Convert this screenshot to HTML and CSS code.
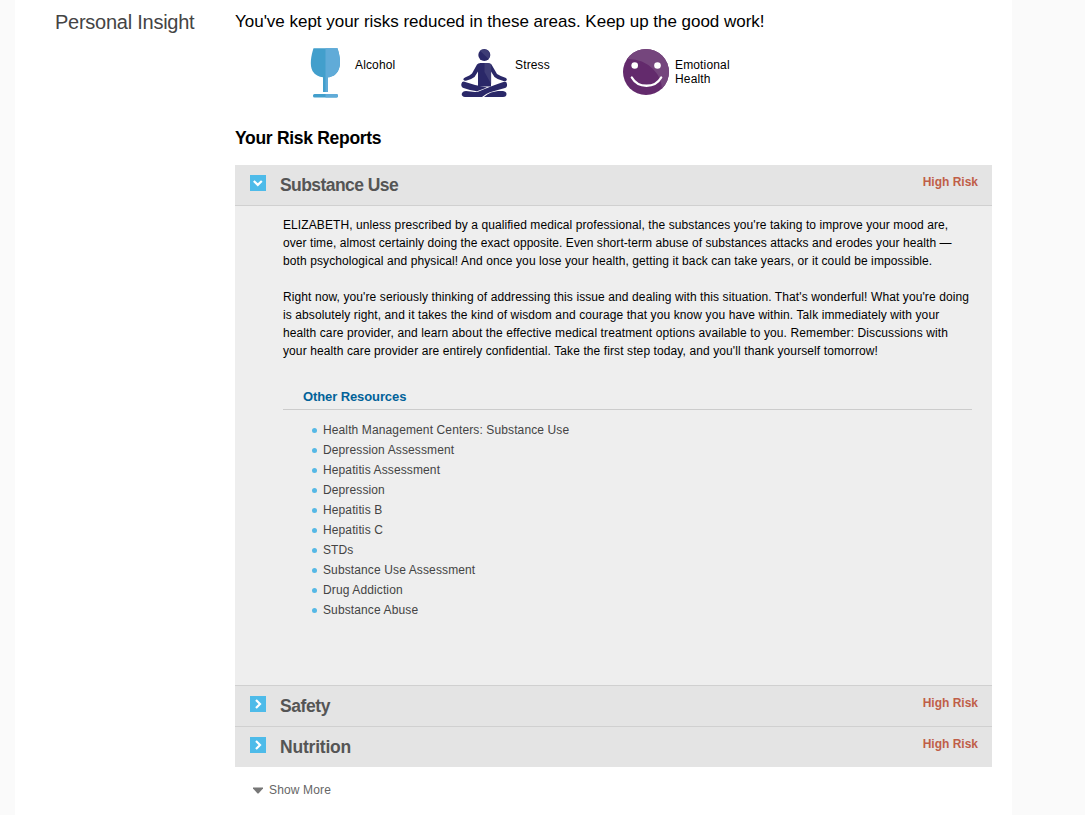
FILE: index.html
```html
<!DOCTYPE html>
<html lang="en">
<head>
<meta charset="utf-8">
<title>Personal Insight</title>
<link rel="stylesheet" href="styles.css">
</head>
<body>
<div class="page">
  <h1 class="side-title">Personal Insight</h1>
  <main class="content">
    <p class="lead">You've kept your risks reduced in these areas. Keep up the good work!</p>
    <div class="areas">
      <div class="area">
        <svg class="area-icon" width="50" height="50" viewBox="0 0 50 50">
          <path fill="#429fcc" d="M13.500 .3H37.500C40 8 41.500 17 38 23C35.500 27.500 31.500 29 28 29.300V44H23V29.300C19 29 15 27 12.500 23C9.500 17 11 8 13.500 .3Z"/>
          <path fill="#60abd8" d="M25.500 .3H37.500C40 8 41.500 17 38 23C35.500 27.500 31.500 29 28 29.300V44H25.500Z"/>
          <rect x="13" y="46" width="25" height="3.600" rx="1.500" fill="#429fcc"/>
          <path fill="#60abd8" d="M25.500 46H36.500Q38 46 38 47.800T36.500 49.600H25.500Z"/>
        </svg>
        <span class="area-name">Alcohol</span>
      </div>
      <div class="area">
        <svg class="area-icon" width="50" height="50" viewBox="0 0 50 50">
          <g fill="#2a2868">
            <circle cx="24.300" cy="6.900" r="6"/>
            <path d="M17 16.500Q18 15 20.500 15H28Q30.500 15 31.500 16.500L37 26Q41 28.500 46 30Q47.500 31 46.500 32.500Q45 33.500 42 32.500Q37 31 34.500 29L31 23.500V38.500H18V23.500L14.500 29Q12 31 6 32.700Q4 33 3.300 31.500Q3.300 30 5.500 29.300Q10 27.500 12 25.500Z"/>
            <path d="M4.500 33.700Q2 33.200 1.300 36Q1 39 3.500 40Q10 42.500 17 43.300L27 39.500Q15 37.500 4.500 33.700Z"/>
            <path d="M44 33.700Q46.500 33.200 47 36Q47.500 39 45 40Q36 42.500 30 44.200Q25 46 22 49H5Q1.700 48.500 1.700 46Q2.500 43.200 6 43L15 44Q18 44 21 42.500Q30 38.500 44 33.700Z"/>
            <path d="M31 44.500Q34 43.600 38 43H43Q46.500 43.500 46.500 46Q46.500 48.800 43 49H24Q27 46 31 44.500Z"/>
          </g>
          <path fill="#47467c" d="M20 2.700A6 6 0 0 1 28.500 11.100ZM24.500 15H28Q30.500 15 31.200 16.500V36L24.500 24Z" opacity=".7"/>
        </svg>
        <span class="area-name">Stress</span>
      </div>
      <div class="area">
        <svg class="area-icon" width="50" height="50" viewBox="0 0 50 50">
          <clipPath id="face"><circle cx="26" cy="24" r="23"/></clipPath>
          <circle cx="26" cy="24" r="23" fill="#632a6c"/>
          <path clip-path="url(#face)" fill="#75467d" d="M6 11Q22 10 33 21Q42 30 42 42H50V0H6Z"/>
          <circle cx="14.700" cy="17.500" r="3.300" fill="#fff"/>
          <circle cx="37.500" cy="17.500" r="3.300" fill="#fff"/>
          <path d="M11.800 29.500C18 40.500 35 40.500 41.200 29.500" fill="none" stroke="#fff" stroke-width="2.300" stroke-linecap="round"/>
        </svg>
        <span class="area-name">Emotional<br>Health</span>
      </div>
    </div>
    <h2 class="reports-title">Your Risk Reports</h2>
    <div class="accordion">
      <section class="report">
        <header class="report-head">
          <svg class="toggle" width="16" height="16" viewBox="0 0 16 16"><rect width="16" height="16" fill="#4ebbe9"/><path d="M3.800 6L7.800 9.900L11.800 6" fill="none" stroke="#fff" stroke-width="2.200"/></svg>
          <h3 class="report-name name-substance">Substance Use</h3>
          <span class="risk">High Risk</span>
        </header>
        <div class="report-body">
          <p class="para"><span class="tight">ELIZABETH, unless prescribed by a qualified medical professional, the substances you're taking to improve your mood are,</span><br><span class="tighter">over time, almost certainly doing the exact opposite. Even short-term abuse of substances attacks and erodes your health —</span><br>both psychological and physical! And once you lose your health, getting it back can take years, or it could be impossible.</p>
          <p class="para">Right now, you're seriously thinking of addressing this issue and dealing with this situation. That's wonderful! What you're doing<br><span class="loose">is absolutely right, and it takes the kind of wisdom and courage that you know you have within. Talk immediately with your</span><br><span class="loose">health care provider, and learn about the effective medical treatment options available to you. Remember: Discussions with</span><br>your health care provider are entirely confidential. Take the first step today, and you'll thank yourself tomorrow!</p>
          <h4 class="resources-title">Other Resources</h4>
          <ul class="resources">
            <li>Health Management Centers: Substance Use</li>
            <li>Depression Assessment</li>
            <li>Hepatitis Assessment</li>
            <li>Depression</li>
            <li>Hepatitis B</li>
            <li>Hepatitis C</li>
            <li>STDs</li>
            <li>Substance Use Assessment</li>
            <li>Drug Addiction</li>
            <li>Substance Abuse</li>
          </ul>
        </div>
      </section>
      <section class="report">
        <header class="report-head">
          <svg class="toggle" width="16" height="16" viewBox="0 0 16 16"><rect width="16" height="16" fill="#4ebbe9"/><path d="M6 4L10 8L6 12" fill="none" stroke="#fff" stroke-width="2.200"/></svg>
          <h3 class="report-name">Safety</h3>
          <span class="risk">High Risk</span>
        </header>
      </section>
      <section class="report">
        <header class="report-head">
          <svg class="toggle" width="16" height="16" viewBox="0 0 16 16"><rect width="16" height="16" fill="#4ebbe9"/><path d="M6 4L10 8L6 12" fill="none" stroke="#fff" stroke-width="2.200"/></svg>
          <h3 class="report-name name-nutrition">Nutrition</h3>
          <span class="risk">High Risk</span>
        </header>
      </section>
    </div>
    <div class="more">
      <svg width="12" height="7" viewBox="0 0 12 7"><path d="M1 .5H11V1.500L6.500 6.500H5.500L1 1.500Z" fill="#777"/></svg>
      <span>Show More</span>
    </div>
  </main>
</div>
</body>
</html>
```

FILE: styles.css
```css
* { box-sizing: border-box; margin: 0; padding: 0; }
body {
  height: 815px;
  padding: 0 73px 0 15px;
  overflow: hidden;
  background: #fafafa;
  color: #000;
  font: 12px/18px "Liberation Sans", Arial, sans-serif;
}
.page {
  display: flex;
  height: 815px;
  padding: 0 20px 0 40px;
  background: #fff;
  white-space: nowrap;
}
.side-title {
  width: 180px;
  padding-top: 10px;
  color: #444;
  font-size: 20px;
  font-weight: normal;
  line-height: 24px;
  letter-spacing: -.25px;
}
.content { width: 757px; }
.lead { padding-top: 12px; font-size: 17px; line-height: 20px; letter-spacing: -.02px; }
.areas { display: flex; margin-top: 16px; padding-left: 65px; }
.area { display: flex; width: 160px; height: 50px; gap: 5px; }
.area-name { padding-top: 10px; line-height: 14px; letter-spacing: .15px; }
.reports-title { margin-top: 30px; font-size: 17.5px; line-height: 20px; letter-spacing: -.3px; }
.accordion { margin-top: 17px; }
.report-head {
  display: flex;
  height: 40px;
  padding: 10px 14px 0 15px;
  background: #e4e4e4;
}
.report + .report { border-top: 1px solid #d0d0d0; }
.report-name { margin-left: 14px; color: #555; font-size: 17.5px; line-height: 20px; letter-spacing: -.4px; }
.name-substance { letter-spacing: -.57px; }
.name-nutrition { letter-spacing: -.2px; }
.risk { margin-left: auto; margin-top: -2px; color: #c05e48; font-weight: bold; }
.report-body {
  height: 480px;
  padding: 10px 20px 0 48px;
  border-top: 1px solid #d0d0d0;
  background: #eee;
  letter-spacing: .1px;
}
.para { margin-bottom: 18px; }
.tight { letter-spacing: .088px; }
.tighter { letter-spacing: .062px; }
.loose { letter-spacing: .105px; }
.resources-title {
  height: 22px;
  margin-top: 28px;
  padding: 0 20px;
  border-bottom: 1px solid #ccc;
  color: #016299;
  font-size: 13px;
  letter-spacing: -.1px;
}
.resources { padding: 10px 0 0 40px; list-style: none; color: #444; line-height: 20px; letter-spacing: .12px; }
.resources li { display: flex; align-items: center; }
.resources li::before {
  width: 5px;
  height: 5px;
  margin: 1px 6px 0 -11px;
  border-radius: 50%;
  background: #55b8e5;
  content: "";
}
.more { display: flex; align-items: center; gap: 5px; margin-top: 14px; padding-left: 17px; color: #666; letter-spacing: .15px; }
```
